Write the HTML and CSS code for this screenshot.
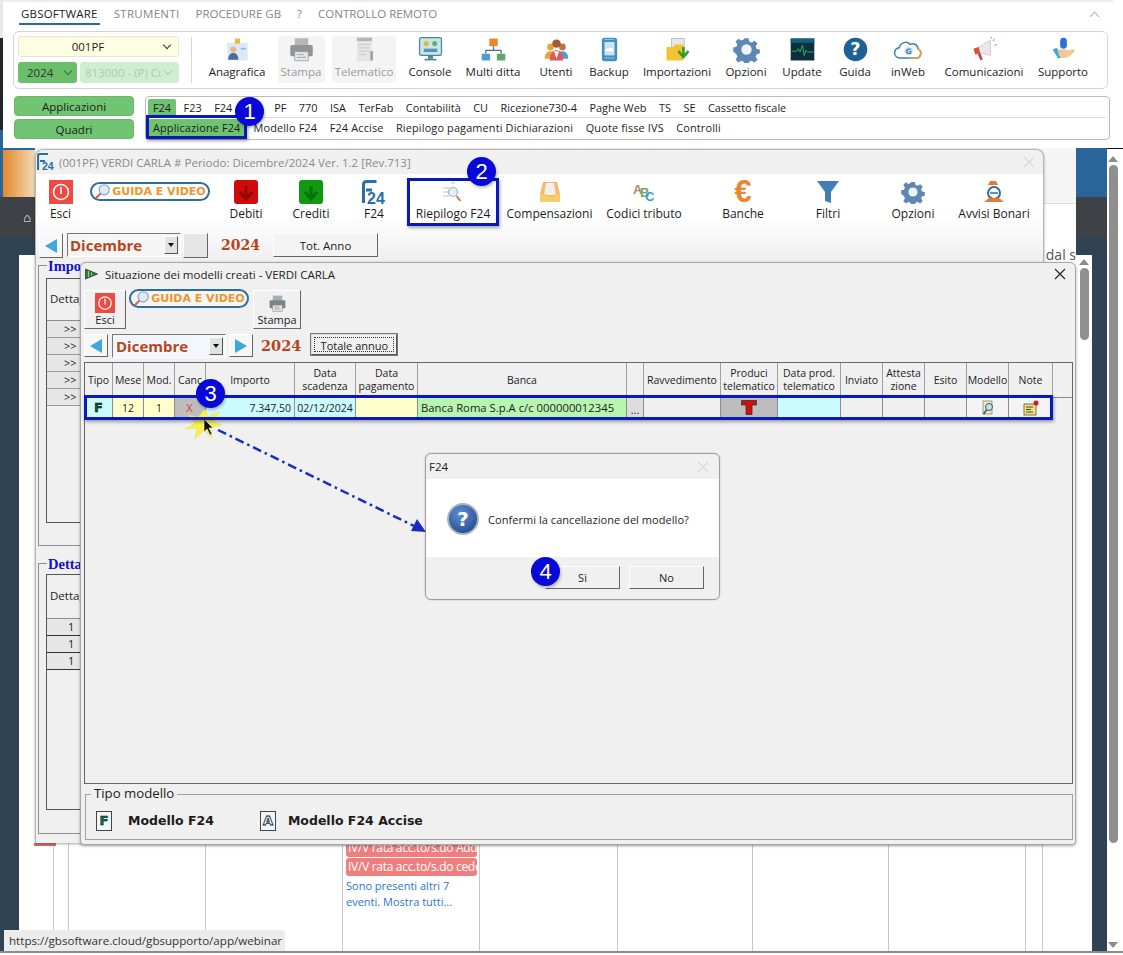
FILE: index.html
```html
<!DOCTYPE html>
<html lang="it">
<head>
<meta charset="utf-8">
<title>F24 - Situazione dei modelli creati</title>
<link rel="stylesheet" href="styles.css">
</head>
<body>
<svg class="defs" width="0" height="0">
  <defs>
    <symbol id="i-esci" viewBox="0 0 24 24"><rect width="24" height="24" fill="#ef4a42"/><circle cx="12" cy="12" r="7.5" fill="none" stroke="#fff" stroke-width="1.5"/><path d="M12 7v7" stroke="#fff" stroke-width="1.6"/></symbol>
    <symbol id="i-print" viewBox="0 0 24 24"><rect x="6" y="2" width="12" height="7" fill="#a9adb0"/><rect x="2" y="8" width="20" height="10" rx="1.5" fill="#7d8488"/><rect x="6" y="14" width="12" height="8" fill="#e3e5e6" stroke="#8a9093" stroke-width=".7"/><rect x="8" y="16" width="6" height="1" fill="#9aa0a3"/><rect x="8" y="18.500" width="8" height="1" fill="#9aa0a3"/></symbol>
    <symbol id="i-gear" viewBox="0 0 24 24"><path d="M10 1h4l.7 3.200 2.400 1 2.800-1.800 2.800 2.800-1.800 2.800 1 2.400 3.100.6v4l-3.100.7-1 2.400 1.800 2.800-2.800 2.800-2.800-1.800-2.400 1-.7 3.100h-4l-.7-3.100-2.400-1-2.800 1.800-2.800-2.800 1.800-2.800-1-2.400L-1 14v-4l3.100-.6 1-2.400-1.800-2.800 2.800-2.800 2.800 1.800 2.400-1z" transform="translate(1.100 1.100) scale(.91)" fill="#5f87b3"/><circle cx="12" cy="12" r="4.600" fill="#eef3f8"/></symbol>
    <symbol id="i-lens" viewBox="0 0 20 20"><circle cx="12" cy="8" r="6" fill="#dbeaf6" stroke="#8f9fae" stroke-width="1.300"/><path d="M7.500 12.500l-6 6" stroke="#d9534f" stroke-width="2.200"/></symbol>
    <symbol id="i-x" viewBox="0 0 12 12"><path d="M1 1l10 10M11 1L1 11" fill="none" stroke="currentColor" stroke-width="1.100"/></symbol>
  </defs>
</svg>
<div class="desktop">

  <div class="edge-strip"><span class="edge-light"></span><span class="edge-dark"></span><span class="edge-blue"></span></div>

  <div class="web">
    <div class="web-side">
      <div class="band band-blue"><div class="band-orange"></div></div>
      <div class="band band-grey"><span class="home">&#8962;</span></div>
      <div class="band band-navy"></div>
      <div class="side-low"><div class="side-dark"></div></div>
    </div>
    <div class="web-main">
      <div class="page-head"></div>
      <div class="page-text">to dal s</div>
      <div class="calendar">
        <div class="cal-cell cal-red"><span class="red-tick"></span></div>
        <div class="cal-cell"></div>
        <div class="cal-cell"></div>
        <div class="cal-cell"></div>
        <div class="cal-cell cal-events">
          <div class="event">IV/V rata acc.to/s.do Addizionale</div>
          <div class="event">IV/V rata acc.to/s.do cedolare</div>
          <a class="more">Sono presenti altri 7<br>eventi. Mostra tutti...</a>
        </div>
        <div class="cal-cell"></div>
        <div class="cal-cell"></div>
        <div class="cal-cell"></div>
        <div class="cal-cell"></div>
        <div class="cal-cell"></div>
        <div class="cal-cell cal-last"></div>
      </div>
    </div>
    <div class="web-right">
      <div class="band band-blue"></div>
      <div class="band band-grey"></div>
      <div class="band band-navy"></div>
      <div class="right-low">
        <div class="mini-scroll">
          <span class="arrow-up"></span>
          <span class="thumb thumb-short"></span>
        </div>
        <div class="right-dark"></div>
      </div>
    </div>
    <div class="main-scroll">
      <span class="arrow-up"></span>
      <span class="thumb thumb-long"></span>
      <span class="arrow-down"></span>
    </div>
  </div>
  <div class="web-foot"></div>
  <div class="status-tip">https://gbsoftware.cloud/gbsupporto/app/webinar</div>

  <!-- barra applicativa -->
  <section class="app">
    <nav class="menu">
      <span class="menu-item menu-active">GBSOFTWARE</span>
      <span class="menu-item menu-wide">STRUMENTI</span>
      <span class="menu-item">PROCEDURE GB</span>
      <span class="menu-item">?</span>
      <span class="menu-item">CONTROLLO REMOTO</span>
      <span class="menu-collapse"></span>
    </nav>
    <div class="ribbon">
      <div class="selectors">
        <div class="sel sel-company">001PF<span class="chev"></span></div>
        <div class="sel-row">
          <div class="sel sel-year">2024<span class="chev"></span></div>
          <div class="sel sel-activity"><span class="sel-clip">813000 - (P) Cu</span><span class="chev chev-faint"></span></div>
        </div>
      </div>
      <div class="ribbon-tools">
        <div class="rb"><svg class="rb-ic" viewBox="0 0 32 32"><rect x="4" y="8" width="24" height="21" fill="#dbe9f6"/><rect x="13" y="3" width="6" height="6" fill="#f3b53a"/><circle cx="11" cy="16" r="3.500" fill="#e8b58f"/><path d="M5 28c0-6 3-8 6-8s6 2 6 8z" fill="#3d6f9f"/><path d="M10 20h2l-1 6z" fill="#d9403a"/><rect x="20" y="14" width="6" height="2" fill="#9bb6cf"/></svg><span>Anagrafica</span></div>
        <div class="rb rb-off"><div class="rb-box rb-box-s"><svg class="rb-ic" viewBox="0 0 24 24"><use href="#i-print"/></svg><span>Stampa</span></div></div>
        <div class="rb rb-off"><div class="rb-box rb-box-t"><svg class="rb-ic" viewBox="0 0 32 32"><rect x="7" y="2" width="18" height="28" fill="#e3e3e3"/><rect x="7" y="2" width="18" height="4" fill="#a9a9a9"/><path d="M10 10h12M10 14h12M10 18h12M10 22h8" stroke="#bdbdbd"/><rect x="23" y="18" width="3" height="11" fill="#8e8e8e"/></svg><span>Telematico</span></div></div>
        <div class="rb"><svg class="rb-ic" viewBox="0 0 32 32"><rect x="3" y="2" width="26" height="21" rx="2" fill="#c8e6e6" stroke="#4d8793" stroke-width="1.500"/><circle cx="11" cy="9" r="3" fill="#e8b04a"/><circle cx="21" cy="9" r="3" fill="#5fae6b"/><rect x="8" y="15" width="16" height="4" fill="#5a8fc0"/><rect x="13" y="23" width="6" height="4" fill="#4d8793"/><rect x="9" y="27" width="14" height="2" fill="#4d8793"/></svg><span>Console</span></div>
        <div class="rb"><svg class="rb-ic" viewBox="0 0 32 32"><rect x="11" y="3" width="10" height="9" rx="1" fill="#e8892e"/><path d="M16 12v5M7 21v-4h18v4" fill="none" stroke="#4d6f8c" stroke-width="1.500"/><rect x="2" y="21" width="10" height="8" rx="1" fill="#4f9ed6"/><rect x="20" y="21" width="10" height="8" rx="1" fill="#5cab6c"/></svg><span>Multi ditta</span></div>
        <div class="rb"><svg class="rb-ic" viewBox="0 0 32 32"><circle cx="9" cy="13" r="4" fill="#e8a33a"/><path d="M2 27c0-6 3-9 7-9s7 3 7 9z" fill="#e8a33a"/><circle cx="23" cy="13" r="4" fill="#c2704a"/><path d="M16 27c0-6 3-9 7-9s7 3 7 9z" fill="#4f9ed6"/><circle cx="16" cy="9" r="5" fill="#a05a3a"/><path d="M8 29c0-9 4-12 8-12s8 3 8 12z" fill="#e05a5a"/><path d="M13 18h6l-3 9z" fill="#fff"/></svg><span>Utenti</span></div>
        <div class="rb"><svg class="rb-ic" viewBox="0 0 32 32"><rect x="7" y="2" width="18" height="28" rx="3" fill="#3f8ec2"/><rect x="10" y="7" width="12" height="16" fill="#cfe3f1"/><path d="M11 18c0-3 2-4 4-3 2-2 6-1 6 3z" fill="#fff"/><path d="M10 4h12M10 26h12" stroke="#a8cfe8"/></svg><span>Backup</span></div>
        <div class="rb"><svg class="rb-ic" viewBox="0 0 32 32"><rect x="9" y="3" width="15" height="12" fill="#e8e8ec" stroke="#b9b9c2"/><path d="M3 13h8l2-3h10v19H3z" fill="#f2c230"/><path d="M23 13v10M17 18l6 7 6-7" fill="none" stroke="#2f9e22" stroke-width="3"/></svg><span>Importazioni</span></div>
        <div class="rb"><svg class="rb-ic" viewBox="0 0 24 24"><use href="#i-gear"/></svg><span>Opzioni</span></div>
        <div class="rb"><svg class="rb-ic" viewBox="0 0 32 32"><rect x="2" y="3" width="28" height="26" fill="#0d2f3d"/><rect x="2" y="3" width="28" height="5" fill="#14607c"/><path d="M3 18h6l2-3 2 4 3-8 2 12 2-6 2 2h7" fill="none" stroke="#35c26b"/></svg><span>Update</span></div>
        <div class="rb"><svg class="rb-ic" viewBox="0 0 32 32"><circle cx="16" cy="16" r="14" fill="#1f6096"/><text x="16" y="23" class="ic-q">?</text></svg><span>Guida</span></div>
        <div class="rb"><svg class="rb-ic rb-wide" viewBox="0 0 36 32"><path d="M8 26a6 6 0 0 1-1-12c1-6 9-9 13-4 4-2 9 0 9 5a6 6 0 0 1 0 11z" fill="#fff" stroke="#3d7fb5" stroke-width="1.800"/><path d="M19 26h10a6 6 0 0 0 0-11" fill="none" stroke="#ef9f3c" stroke-width="1.800"/><circle cx="18" cy="18" r="5" fill="#cfe0ee"/><text x="18" y="21" class="ic-g">G</text></svg><span>inWeb</span></div>
        <div class="rb"><svg class="rb-ic" viewBox="0 0 32 32"><path d="M6 15l17-10v18L6 19z" fill="#e9e9ea" stroke="#c9c9cc"/><path d="M3 15l6-2 2 7-6 2z" fill="#e04b3a"/><path d="M8 21l3 7h3l-3-8z" fill="#c23a2d"/><path d="M26 6l2-3M28 11l3-1M24 3l0-2" stroke="#3fae4e"/></svg><span>Comunicazioni</span></div>
        <div class="rb"><svg class="rb-ic" viewBox="0 0 32 32"><rect x="12" y="2" width="8" height="13" rx="4" fill="#2e6fd6"/><path d="M3 16l7 11 4-2-6-11z" fill="#3fa8de"/><path d="M9 16h8c3 0 4 2 8 0 3-1 5 0 4 2-3 4-7 8-14 8l-4-2z" fill="#f0c98d"/></svg><span>Supporto</span></div>
      </div>
    </div>
    <div class="nav-row">
      <div class="side-btns">
        <button class="green-btn">Applicazioni</button>
        <button class="green-btn">Quadri</button>
      </div>
      <div class="app-tabs">
        <div class="tab-line tab-line-top">
          <span class="tab tab-on">F24</span><span class="tab">F23</span><span class="tab tab-hidden">F24</span><span class="tab">PF</span><span class="tab">770</span><span class="tab">ISA</span><span class="tab">TerFab</span><span class="tab">Contabilità</span><span class="tab">CU</span><span class="tab">Ricezione730-4</span><span class="tab">Paghe Web</span><span class="tab">TS</span><span class="tab">SE</span><span class="tab">Cassetto fiscale</span>
        </div>
        <div class="tab-line tab-line-sub">
          <span class="tab tab-on tab-sub">Applicazione F24</span><span class="tab">Modello F24</span><span class="tab">F24 Accise</span><span class="tab">Riepilogo pagamenti Dichiarazioni</span><span class="tab">Quote fisse IVS</span><span class="tab">Controlli</span>
        </div>
      </div>
    </div>
  </section>

  <!-- finestra F24 -->
  <section class="win win-f24">
    <header class="win-title win-title-off">
      <svg class="logo-sm" viewBox="0 0 18 18"><path d="M1 17V3c0-1.500 1-2 2-2h8" fill="none" stroke="#2a6fa5" stroke-width="2.200"/><path d="M3 8h5" stroke="#2a6fa5" stroke-width="2"/><text x="5" y="17" class="logo-t">24</text></svg>
      <span>(001PF) VERDI CARLA # Periodo: Dicembre/2024 Ver. 1.2 [Rev.713]</span>
      <svg class="win-x win-x-off" viewBox="0 0 12 12"><use href="#i-x"/></svg>
    </header>
    <div class="f24-tools">
      <div class="fb"><svg class="fb-ic" viewBox="0 0 24 24"><use href="#i-esci"/></svg><span>Esci</span></div>
      <div class="fb fb-guide"><div class="guide"><svg class="guide-ic" viewBox="0 0 20 20"><use href="#i-lens"/></svg><span>GUIDA E VIDEO</span></div></div>
      <div class="fb"><svg class="fb-ic" viewBox="0 0 24 24"><rect width="24" height="24" rx="3" fill="#cf0a0a"/><path d="M12 6v12M6 12l6 7 6-7" fill="none" stroke="#8f0606" stroke-width="3"/></svg><span>Debiti</span></div>
      <div class="fb"><svg class="fb-ic" viewBox="0 0 24 24"><rect width="24" height="24" rx="3" fill="#0f9a12"/><path d="M12 6v12M6 12l6 7 6-7" fill="none" stroke="#0a6f0c" stroke-width="3"/></svg><span>Crediti</span></div>
      <div class="fb"><svg class="fb-ic" viewBox="0 0 24 24"><path d="M1.500 23V5c0-2 1-3.500 3-3.500h10" fill="none" stroke="#2a6fa5" stroke-width="3"/><path d="M4 10h6" stroke="#2a6fa5" stroke-width="3"/><text x="5" y="23.500" class="logo-b">24</text></svg><span>F24</span></div>
      <div class="fb"><svg class="fb-ic" viewBox="0 0 24 24"><path d="M2 8h6M2 12h5M2 16h6M10 3h4" stroke="#d2d5d8" stroke-width="1.300"/><circle cx="12" cy="12" r="4.500" fill="#e3eef7" stroke="#a5b1bc" stroke-width="1.200"/><path d="M15.500 16l4 5" stroke="#e06a66" stroke-width="2"/></svg><span>Riepilogo F24</span></div>
      <div class="fb"><svg class="fb-ic" viewBox="0 0 24 24"><path d="M5 2h14l3 12v8H2v-8z" fill="#f5b96a"/><path d="M8 3h8l2 12H6z" fill="#f3eef0"/><path d="M2 14h6l1 3h6l1-3h6v8H2z" fill="#f7cc6a"/></svg><span>Compensazioni</span></div>
      <div class="fb"><svg class="fb-ic" viewBox="0 0 24 24"><text x="1" y="14" class="abc abc-a">A</text><text x="8" y="17" class="abc abc-b">B</text><text x="13" y="21" class="abc abc-c">C</text></svg><span>Codici tributo</span></div>
      <div class="fb"><span class="euro">€</span><span>Banche</span></div>
      <div class="fb"><svg class="fb-ic" viewBox="0 0 24 24"><path d="M1 1h22l-8 11v11l-6-2v-9z" fill="#3f7fb5"/></svg><span>Filtri</span></div>
      <div class="fb"><svg class="fb-ic" viewBox="0 0 24 24"><use href="#i-gear"/></svg><span>Opzioni</span></div>
      <div class="fb"><svg class="fb-ic" viewBox="0 0 24 24"><path d="M8 1h6l2 4H6z" fill="#e8792e"/><circle cx="12" cy="13" r="6" fill="#fff" stroke="#2a6fa5" stroke-width="2"/><path d="M8 13h8" stroke="#2a6fa5" stroke-width="1.500"/><path d="M2 22l5-4h10l5 4z" fill="#e8792e"/></svg><span>Avvisi Bonari</span></div>
    </div>
    <div class="nav nav-f24">
      <button class="bev arrow-btn"><span class="tri tri-l"></span></button>
      <div class="combo combo-f24"><span>Dicembre</span><span class="combo-drop"></span></div>
      <button class="bev arrow-btn arrow-empty"></button>
      <span class="year year-f24">2024</span>
      <button class="bev totanno">Tot. Anno</button>
    </div>
    <div class="group group-top">
      <span class="legend">Impo</span>
      <div class="legacy-grid">
        <div class="legacy-head">Dettaglio</div>
        <div class="legacy-row">&gt;&gt;</div>
        <div class="legacy-row">&gt;&gt;</div>
        <div class="legacy-row">&gt;&gt;</div>
        <div class="legacy-row">&gt;&gt;</div>
        <div class="legacy-row">&gt;&gt;</div>
      </div>
    </div>
    <div class="group group-bottom">
      <span class="legend">Detta</span>
      <div class="legacy-grid legacy-low">
        <div class="legacy-head">Dettaglio</div>
        <div class="legacy-row legacy-num">1</div>
        <div class="legacy-row legacy-num">1</div>
        <div class="legacy-row legacy-num">1</div>
      </div>
    </div>
  </section>

  <!-- finestra Situazione -->
  <section class="win win-sit">
    <header class="win-title">
      <svg class="logo-flag" viewBox="0 0 14 12"><path d="M1 1l12 5-12 5z" fill="#2f7d3a" stroke="#222" stroke-width=".7"/><path d="M4 3v6M7 4.500v3" stroke="#9ad09e"/></svg>
      <span>Situazione dei modelli creati - VERDI CARLA</span>
      <svg class="win-x" viewBox="0 0 12 12"><use href="#i-x"/></svg>
    </header>
    <div class="sit-tools">
      <button class="bev tool-esci"><svg class="tool-ic" viewBox="0 0 24 24"><use href="#i-esci"/></svg><span>Esci</span></button>
      <div class="guide guide-sit"><svg class="guide-ic" viewBox="0 0 20 20"><use href="#i-lens"/></svg><span>GUIDA E VIDEO</span></div>
      <button class="bev tool-stampa"><svg class="tool-ic tool-ic-p" viewBox="0 0 24 24"><use href="#i-print"/></svg><span>Stampa</span></button>
    </div>
    <div class="nav nav-sit">
      <button class="bev arrow-btn arrow-s"><span class="tri tri-l"></span></button>
      <div class="combo combo-sit"><span>Dicembre</span><span class="combo-drop"></span></div>
      <button class="bev arrow-btn arrow-s"><span class="tri tri-r"></span></button>
      <span class="year year-sit">2024</span>
      <button class="bev-focus"><span>Totale annuo</span></button>
    </div>
    <div class="table">
      <div class="t-head">
        <div class="th">Tipo</div><div class="th">Mese</div><div class="th">Mod.</div><div class="th">Canc</div><div class="th">Importo</div><div class="th">Data<br>scadenza</div><div class="th">Data<br>pagamento</div><div class="th">Banca</div><div class="th"></div><div class="th">Ravvedimento</div><div class="th">Produci<br>telematico</div><div class="th">Data prod.<br>telematico</div><div class="th">Inviato</div><div class="th">Attesta<br>zione</div><div class="th">Esito</div><div class="th">Modello</div><div class="th">Note</div><div class="th th-end"></div>
      </div>
      <div class="t-row">
        <div class="td td-cyan"><span class="mark-f">F</span></div>
        <div class="td td-yellow">12</div>
        <div class="td td-yellow">1</div>
        <div class="td td-grey"><span class="cancel">X</span></div>
        <div class="td td-cyan td-num">7.347,50</div>
        <div class="td td-cyan">02/12/2024</div>
        <div class="td td-yellow"></div>
        <div class="td td-green td-left">Banca Roma S.p.A c/c 000000012345</div>
        <div class="td td-dots">...</div>
        <div class="td"></div>
        <div class="td td-grey"><svg class="cell-t" viewBox="0 0 16 15" preserveAspectRatio="none"><path d="M.5.500h15v4.500h-4.500v9.500h-6V5H.5z" fill="#d60d0d" stroke="#333" stroke-width=".8"/></svg></div>
        <div class="td td-cyan"></div>
        <div class="td"></div>
        <div class="td"></div>
        <div class="td"></div>
        <div class="td td-btn"><svg class="cell-ic" viewBox="0 0 16 16"><rect x="3" y="1" width="9" height="13" fill="#f4e7b4" stroke="#777" stroke-width=".7"/><circle cx="9" cy="7" r="3.500" fill="#bfe3f2" stroke="#2c5a75"/><path d="M6.500 10l-3 4" stroke="#2c5a75" stroke-width="1.500"/></svg></div>
        <div class="td td-btn"><svg class="cell-ic" viewBox="0 0 16 16"><rect x="1" y="4" width="12" height="11" fill="#f5e27a" stroke="#554" stroke-width=".8"/><path d="M3 7h7M3 9.500h5M3 12h7" stroke="#444"/><circle cx="13" cy="3" r="2.500" fill="#d61c1c"/></svg></div>
      </div>
    </div>
    <div class="legend-box">
      <span class="legend-title">Tipo modello</span>
      <span class="key key-f">F</span><strong class="key-text">Modello F24</strong>
      <span class="key key-a">A</span><strong class="key-text">Modello F24 Accise</strong>
    </div>
  </section>

  <!-- dialogo -->
  <section class="dialog">
    <header class="dlg-title"><span>F24</span><svg class="win-x win-x-off" viewBox="0 0 12 12"><use href="#i-x"/></svg></header>
    <div class="dlg-body">
      <span class="dlg-q">?</span>
      <span>Confermi la cancellazione del modello?</span>
    </div>
    <footer class="dlg-foot">
      <button class="bev dlg-btn">Sì</button>
      <button class="bev dlg-btn">No</button>
    </footer>
  </section>

  <!-- annotazioni -->
  <svg class="overlay" width="1123" height="955" viewBox="0 0 1123 955">
    <path class="dash" d="M218 430L414 526"/>
    <path d="M426 532L411 531L417 519z" fill="#1a2bc4"/>
    <path d="M205 409l3 8 12-6-7 10 9 4-11 2 1 11-8-8-9 9 2-11-12 1 10-6-7-8 10 2z" fill="#f8f04e" stroke="#e9de3e" stroke-width=".5"/>
    <path d="M204 419v13l3-3 3 6 2-1-3-6h4z" fill="#111" stroke="#fff" stroke-width=".6"/>
  </svg>
  <div class="hl hl-1"></div>
  <div class="hl hl-2"></div>
  <div class="hl hl-3"></div>
  <span class="badge badge-1">1</span>
  <span class="badge badge-2">2</span>
  <span class="badge badge-3">3</span>
  <span class="badge badge-4">4</span>
</div>
</body>
</html>
```
FILE: styles.css
```css
* { box-sizing: border-box; }
html, body { margin: 0; padding: 0; }
body { background: #fff; font-family: "Open Sans", "Noto Sans", sans-serif; color: #1c1c1c; }
button { font: inherit; color: inherit; padding: 0; cursor: default; }
.defs { position: absolute; }
.desktop { position: relative; width: 1123px; height: 955px; overflow: hidden; background: #fff; }
.edge-strip { position: absolute; left: 0; top: 0; width: 3px; height: 148px; display: flex; flex-direction: column; }
.edge-light { height: 38px; background: #e8e8e8; }
.edge-dark { height: 92px; background: #22262a; }
.edge-blue { flex: 1; background: #2a6599; }

/* pagina web di sfondo */
.web { display: flex; position: absolute; left: 0; top: 148px; width: 1123px; height: 803px; }
.web-side { width: 35px; display: flex; flex-direction: column; }
.band { flex: none; }
.band-blue { height: 49px; background: #2a6599; padding: 2px 0 0 3px; }
.band-orange { width: 32px; height: 47px; background: linear-gradient(90deg, #e08a2c, #f4d9b8); }
.band-grey { height: 40px; background: #3e4145; display: flex; align-items: center; justify-content: flex-end; padding-right: 4px; color: #fff; }
.home { font-size: 13px; line-height: 1; }
.band-navy { height: 18px; background: #2f4354; }
.side-low { flex: 1; display: flex; background: #fff; }
.side-dark { width: 19px; background: #2f4354; }
.web-main { width: 1041px; display: flex; flex-direction: column; background: #fff; position: relative; }
.page-head { height: 56px; background: #f5f5f5; border-bottom: 1px solid #ddd; flex: none; }
.page-text { height: 639px; padding-top: 41px; text-align: right; font-size: 14px; line-height: 20px; color: #555; white-space: nowrap; flex: none; }
.calendar { flex: 1; display: grid; grid-template-columns: 19px 15px 137px 137px 137px 138px 135px 136px 137px 17px 33px; }
.cal-cell { border-right: 1px solid #c9c9c9; min-width: 0; }
.cal-last { border-right: 0; }
.cal-red { position: relative; }
.red-tick { display: block; height: 3px; width: 22px; margin-left: -1px; background: #d96c6c; }
.cal-events { padding: 0 2px 0 3px; overflow: hidden; }
.event { height: 18px; margin-bottom: 1px; padding-left: 2px; border-radius: 3px; background: #ef7f7f; color: #fff; font-size: 12px; line-height: 18px; white-space: nowrap; overflow: hidden; letter-spacing: -.3px; }
.event:first-child { height: 15px; line-height: 12px; margin-top: -1px; }
.more { display: block; margin-top: 2px; font-size: 11px; line-height: 16px; color: #2a77c9; white-space: nowrap; }
.web-right { width: 31px; display: flex; flex-direction: column; }
.right-low { flex: 1; display: flex; }
.mini-scroll { width: 16px; background: #fff; display: flex; flex-direction: column; align-items: center; padding-top: 4px; }
.right-dark { width: 15px; background: #2f4354; }
.main-scroll { width: 16px; background: #fff; display: flex; flex-direction: column; align-items: center; padding: 7px 4px 3px 0; border-top: 1px solid #111; }
.arrow-up { width: 0; height: 0; border: 5px solid transparent; border-top: 0; border-bottom: 6px solid #8a8a8a; flex: none; }
.arrow-down { width: 0; height: 0; border: 5px solid transparent; border-bottom: 0; border-top: 6px solid #8a8a8a; flex: none; margin-top: auto; }
.thumb { display: block; width: 9px; background: #8f8f8f; border-radius: 5px; flex: none; margin-top: 3px; }
.thumb-short { height: 72px; }
.thumb-long { height: 678px; }
.web-foot { position: absolute; left: 0; top: 951px; width: 1123px; height: 4px; border-top: 2px solid #8b8b8b; background: #fff; }
.status-tip { position: absolute; left: 4px; top: 930px; width: 281px; height: 21px; padding-left: 5px; background: #ececec; font-size: 11.600px; line-height: 21px; color: #333; border-radius: 0 3px 0 0; white-space: nowrap; }

/* barra applicativa */
.app { position: absolute; left: 3px; top: 0; width: 1110px; height: 148px; background: #fff; border-top: 2px solid #ededed; padding: 0 3px 0 10px; }
.menu { height: 29px; display: flex; align-items: flex-start; padding: 2px 0 0 6px; font-size: 11.500px; position: relative; }
.menu-item { color: #868686; height: 21px; line-height: 20px; padding: 0 2px; margin-right: 12px; white-space: nowrap; }
.menu-active { color: #222; border-bottom: 2px solid #2a6a9a; letter-spacing: .2px; }
.menu-wide { letter-spacing: .3px; }
.menu-collapse { position: absolute; right: 12px; top: 11px; width: 7px; height: 7px; border-left: 1.500px solid #b5b5b5; border-top: 1.500px solid #b5b5b5; transform: rotate(45deg); }
.ribbon { height: 58px; margin-right: 2px; border: 1px solid #d4d4d4; border-radius: 6px; display: flex; background: #fff; }
.selectors { width: 178px; padding: 0 0 0 4px; display: flex; flex-direction: column; gap: 5px; border-right: 1px solid #d6d6d6; height: 46px; margin-top: 5px; flex: none; margin-right: 14px; }
.sel { position: relative; border-radius: 3px; font-size: 11.500px; display: flex; align-items: center; white-space: nowrap; }
.sel-company { width: 161px; height: 22px; margin-top: -1px; background: #fffde2; border: 1px solid #e8e5c8; justify-content: center; padding-right: 21px; }
.sel-row { display: flex; gap: 3px; }
.sel-year { width: 59px; height: 21px; background: #6bbf6b; padding-left: 9px; color: #333; }
.sel-activity { width: 99px; height: 21px; background: #cfeecf; padding-left: 5px; color: #a9cfa9; }
.sel-clip { display: block; width: 76px; overflow: hidden; }
.chev { position: absolute; right: 8px; top: 50%; width: 6px; height: 6px; margin-top: -5px; border-right: 1.500px solid #333; border-bottom: 1.500px solid #333; transform: rotate(45deg); }
.chev-faint { border-color: #a9cfa9; }
.sel-year .chev { border-color: #3d6b3d; right: 6px; }
.ribbon-tools { flex: 1; display: grid; grid-template-columns: 64px 64px 62px 70px 56px 70px 36px 100px 38px 74px 32px 74px 78px 80px; padding-top: 4px; margin-left: -1px; }
.rb { display: flex; flex-direction: column; align-items: center; font-size: 11.500px; line-height: 18px; white-space: nowrap; }
.rb-ic { width: 27px; height: 27px; flex: none; }
.rb-wide { width: 33px; }
.rb-off { color: #9a9a9a; }
.rb-box { display: flex; flex-direction: column; align-items: center; height: 47px; background: #f4f4f4; border-radius: 4px; }
.rb-box-s { width: 47px; }
.rb-box-t { width: 64px; }
.rb-off .rb-ic { opacity: .85; }
.ic-q { font: 700 21px "DejaVu Sans", sans-serif; fill: #fff; text-anchor: middle; }
.ic-g { font: 700 9px "DejaVu Sans", sans-serif; fill: #3d7fb5; text-anchor: middle; }
.nav-row { display: flex; gap: 11px; margin-top: 7px; margin-left: 1px; }
.side-btns { width: 120px; display: flex; flex-direction: column; gap: 3px; }
.green-btn { height: 20px; border: 1px solid #68b868; border-radius: 4px; background: #71c471; font-size: 11.500px; line-height: 17px; }
.app-tabs { flex: 1; height: 44px; border: 1px solid #bdbdbd; border-radius: 4px; padding: 1px 3px 0 2px; font-size: 10.900px; }
.tab-line { display: flex; height: 20px; align-items: center; white-space: nowrap; }
.tab-line-top { border-bottom: 1px solid #dcdcdc; height: 20px; }
.tab-line-sub { letter-spacing: .15px; }
.tab { padding: 0 5px; line-height: 18px; margin-right: 2.500px; }
.tab-on { background: #6fc26f; border-radius: 2px; }
.tab-hidden { width: 60px; margin-right: 0; }
.tab-sub { margin-right: 3px; padding: 0 5px; }

/* finestre */
.win { position: absolute; background: #f0f0f0; box-shadow: 0 1px 3px rgba(0,0,0,.35); }
.win-f24 { left: 35px; top: 149px; width: 1009px; height: 694px; border-radius: 8px 8px 0 0; border: 1px solid #b5b5b5; border-bottom: 0; }
.win-title { height: 24px; display: flex; align-items: center; gap: 4px; padding: 0 8px 0 5px; font-size: 11.500px; position: relative; border-radius: 8px 8px 0 0; white-space: nowrap; }
.win-title-off { color: #8a8a8a; background: #f0f0f0; padding-left: 1px; }
.logo-sm { width: 18px; height: 18px; flex: none; }
.logo-t { font: 700 10.500px "Liberation Sans", sans-serif; fill: #2a6fa5; }
.logo-b { font: 700 16px "Liberation Sans", sans-serif; fill: #2a6fa5; }
.logo-flag { width: 15px; height: 12px; flex: none; }
.win-x { margin-left: auto; width: 12px; height: 12px; flex: none; color: #222; }
.win-x-off { color: #d8d8d8; }
.f24-tools { display: grid; grid-template-columns: 49px 130px 62px 68px 58px 100px 93px 96px 102px 68px 102px 60px; height: 56px; padding-top: 6px; background: linear-gradient(#fff 75%, #fafafa); }
.fb { display: flex; flex-direction: column; align-items: center; font-size: 12px; line-height: 18px; white-space: nowrap; gap: 1px; }
.fb-ic { width: 24px; height: 24px; flex: none; }
.fb-guide { justify-content: flex-start; }
.euro { height: 24px; font: 700 31px/24px "Liberation Sans", sans-serif; color: #e8872e; flex: none; }
.abc { font-family: "Liberation Sans", sans-serif; font-weight: 700; font-size: 13px; }
.abc-a { fill: #b08a5a; }
.abc-b { fill: #6fa86f; }
.abc-c { fill: #3f9ed0; }
.guide { display: flex; align-items: center; justify-content: center; gap: 1px; width: 120px; height: 19px; margin-top: 2px; border: 2px solid #2d6d9f; border-radius: 10px; background: #fff; color: #f0942c; font: 700 11px "DejaVu Sans", sans-serif; white-space: nowrap; }
.guide-ic { width: 17px; height: 17px; flex: none; }
.nav { display: flex; align-items: flex-start; }
.bev { border: 1px solid; border-color: #fff #666 #666 #fff; background: #f0f0f0; }
.nav-f24 { height: 27px; padding: 3px 0 0 3px; background: linear-gradient(#fafafa, #f0f0f0); }
.arrow-btn { width: 24px; height: 25px; display: flex; align-items: center; justify-content: center; flex: none; background: #f7f7f7; }
.arrow-s { height: 23px; }
.arrow-empty { width: 25px; margin-left: 2px; background: #e6e6e6; }
.tri { width: 0; height: 0; border: 7px solid transparent; }
.tri-l { border-left: 0; border-right: 12px solid #3ea6e0; }
.tri-r { border-right: 0; border-left: 12px solid #3ea6e0; }
.combo { display: flex; align-items: center; justify-content: space-between; margin-left: 4px; height: 24px; border: 1px solid; border-color: #777 #fff #fff #777; color: #b8451a; font-weight: 700; font-size: 15px; padding: 0 2px 0 2px; flex: none; }
.combo-f24 { width: 114px; background: #f5f5f5; }
.combo-sit { width: 114px; background: #f1f7fd; padding-left: 3px; }
.combo-drop { width: 14px; height: 18px; background: #e2e2e2; border: 1px solid; border-color: #fff #555 #555 #fff; position: relative; flex: none; }
.combo-drop::after { content: ""; position: absolute; left: 3px; top: 6px; border: 3px solid transparent; border-top: 4px solid #111; border-bottom: 0; }
.year { font: 700 14.500px "DejaVu Serif", serif; color: #b8451a; flex: none; }
.year-f24 { margin-left: 13px; line-height: 24px; font-size: 14px; }
.totanno { margin-left: 13px; width: 105px; height: 24px; font-size: 11.500px; background: #f4f4f4; flex: none; }
.group { position: relative; margin-left: 2px; width: 1000px; border: 1px solid #8d8d8d; background: #f0f0f0; }
.group-top { height: 281px; margin-top: 8px; padding: 12px 0 0 7px; }
.group-bottom { height: 271px; margin-top: 17px; padding: 10px 0 0 7px; }
.legend { position: absolute; left: 8px; top: -7px; padding: 0 1px; font: 700 14.500px "Liberation Serif", serif; color: #1111cc; background: #f0f0f0; line-height: 14px; }
.legacy-grid { width: 900px; height: 245px; border: 1px solid #555; background: #f0f0f0; }
.legacy-low { height: 236px; }
.legacy-head { height: 42px; font-size: 11.500px; line-height: 39px; padding-left: 3px; border-bottom: 1px solid #8d8d8d; white-space: nowrap; }
.legacy-low .legacy-head { height: 44px; line-height: 42px; }
.legacy-row { height: 17px; border-bottom: 1px solid #9a9a9a; background: #e6e6e6; font-size: 11px; line-height: 16px; padding-left: 17px; }
.legacy-num { padding-left: 21px; border-bottom-color: #333; }

.win-sit { left: 80px; top: 262px; width: 996px; height: 583px; border: 1px solid #a8a8a8; border-radius: 6px 6px 4px 4px; }
.win-sit .win-title { padding: 0 9px 0 3px; height: 22px; gap: 6px; }
.sit-tools { display: flex; align-items: flex-start; gap: 3px; padding: 5px 0 0 3px; height: 49px; }
.tool-esci { width: 42px; height: 39px; display: flex; flex-direction: column; align-items: center; font-size: 11px; line-height: 14px; padding-top: 2px; flex: none; }
.tool-ic { width: 20px; height: 20px; flex: none; }
.tool-ic-p { width: 19px; height: 19px; }
.tool-stampa { width: 48px; height: 39px; display: flex; flex-direction: column; align-items: center; font-size: 11px; line-height: 14px; padding-top: 3px; flex: none; margin-left: 1px; }
.guide-sit { margin-top: -1px; background: #f5f5f5; }
.nav-sit { height: 28px; padding-left: 3px; }
.nav-sit .arrow-s + .combo + .arrow-s { margin-left: 3px; }
.year-sit { margin-left: 8px; line-height: 24px; }
.bev-focus { margin: -1px 0 0 9px; width: 88px; height: 23px; background: #f0f0f0; border: 2px solid #555; border-color: #ddd #555 #555 #ddd; outline: 1px solid #777; outline-offset: -1px; padding: 2px; font-size: 11px; flex: none; }
.bev-focus span { display: block; height: 100%; border: 1px dotted #333; line-height: 15px; }
.table { margin-left: 3px; width: 989px; height: 422px; border: 1px solid #666; background: #f0f0f0; }
.t-head, .t-row { display: grid; grid-template-columns: 28px 31px 31px 31px 89px 61px 62px 209px 17px 77px 57px 63px 42px 42px 42px 42px 44px 1fr; }
.t-head { height: 35px; border-bottom: 1px solid #888; }
.th { display: flex; align-items: center; justify-content: center; text-align: center; font-size: 10.500px; line-height: 13px; border-right: 1px solid #a0a0a0; white-space: nowrap; overflow: hidden; }
.th-end { border-right: 0; }
.t-row { height: 20px; }
.td { display: flex; align-items: center; justify-content: center; font-size: 10.500px; border-right: 1px solid #8d8d8d; border-bottom: 1px solid #8d8d8d; background: #f0f0f0; white-space: nowrap; overflow: hidden; }
.td-cyan { background: #ccfbff; }
.td-yellow { background: #ffffcc; }
.td-green { background: #b8f5b0; }
.td-grey { background: #bdbdbd; }
.td-num { justify-content: flex-end; padding-right: 3px; }
.td-left { justify-content: flex-start; padding-left: 3px; font-size: 11.300px; }
.td-dots { background: #ddd; align-items: flex-end; line-height: 14px; }
.td-btn { background: #f4f4f4; }
.mark-f { font: 900 13px "DejaVu Sans", sans-serif; color: #0c5a2a; -webkit-text-stroke: .4px #000; }
.cancel { color: #d93b3b; font-size: 11px; margin-left: -1px; }
.cell-t { width: 16px; height: 15px; }
.cell-ic { width: 16px; height: 16px; }
.legend-box { position: relative; margin: 10px 0 0 4px; width: 988px; height: 46px; border: 1px solid #a0a0a0; display: flex; align-items: center; padding: 7px 0 0 10px; }
.legend-title { position: absolute; left: 5px; top: -9px; padding: 0 3px; background: #f0f0f0; font-size: 13.200px; line-height: 15px; white-space: nowrap; }
.key { width: 16px; height: 20px; border: 1px solid #444; background: #eef6fb; display: flex; align-items: center; justify-content: center; font: 700 13px "DejaVu Sans", sans-serif; flex: none; }
.key-f { color: #0c7a3a; -webkit-text-stroke: .5px #000; }
.key-a { margin-left: 46px; color: #eef6fb; -webkit-text-stroke: .8px #222; }
.key-text { margin-left: 16px; font: 700 12.500px "DejaVu Sans", sans-serif; white-space: nowrap; }
.key-a + .key-text { margin-left: 12px; }

/* dialogo */
.dialog { position: absolute; left: 425px; top: 453px; width: 295px; height: 147px; border: 1px solid #9d9d9d; border-radius: 6px; background: #f0f0f0; display: flex; flex-direction: column; overflow: hidden; box-shadow: 0 0 2px rgba(0,0,0,.2); }
.dlg-title { height: 25px; flex: none; display: flex; align-items: center; padding: 0 10px 0 3px; font-size: 11.500px; }
.dlg-body { flex: 1; background: #fff; display: flex; align-items: center; gap: 9px; padding: 2px 0 0 21px; font-size: 11px; letter-spacing: .05px; }
.dlg-q { width: 32px; height: 32px; border-radius: 50%; flex: none; display: flex; align-items: center; justify-content: center; background: radial-gradient(circle at 40% 30%, #5d8fd0, #1c3f86); border: 2px solid #aab4c0; color: #fff; font: 700 20px "DejaVu Sans", sans-serif; }
.dlg-foot { height: 42px; flex: none; display: flex; justify-content: flex-end; gap: 9px; padding: 9px 15px 0 0; }
.dlg-btn { width: 75px; height: 23px; font-size: 11px; }

/* annotazioni */
.overlay { position: absolute; left: 0; top: 0; pointer-events: none; }
.dash { fill: none; stroke: #1a2bc4; stroke-width: 2.500; stroke-dasharray: 9 4 2.500 4; }
.hl { position: absolute; border: 3px solid #0a1ab4; box-shadow: 1px 2px 3px rgba(0,0,40,.35); pointer-events: none; }
.hl-1 { left: 146px; top: 115px; width: 101px; height: 24px; }
.hl-2 { left: 407px; top: 178px; width: 92px; height: 48px; }
.hl-3 { left: 84px; top: 395px; width: 969px; height: 25px; }
.badge { position: absolute; width: 29px; height: 29px; border-radius: 50%; background: #0808d8; color: #fff; font: 400 22px/29px "Liberation Sans", sans-serif; text-align: center; box-shadow: 1px 2px 3px rgba(0,0,0,.25); }
.badge-1 { left: 235px; top: 97px; }
.badge-2 { left: 467px; top: 157px; }
.badge-3 { left: 196px; top: 379px; }
.badge-4 { left: 531px; top: 557px; }
```
